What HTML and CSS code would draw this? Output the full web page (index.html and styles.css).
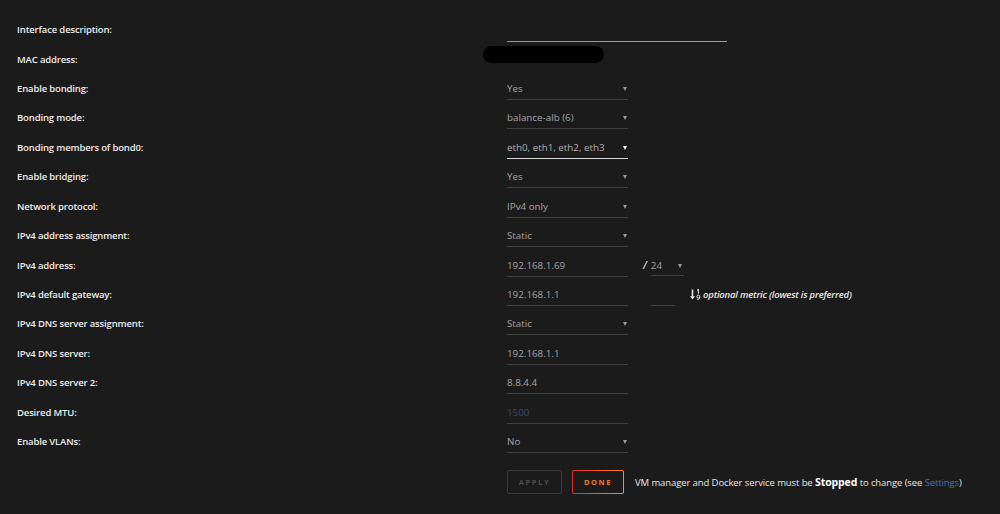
FILE: index.html
```html
<!DOCTYPE html>
<html>
<head>
<meta charset="utf-8">
<link rel="stylesheet" href="styles.css">
</head>
<body>
<div class="form">
  <div class="label">Interface description:</div>
  <div class="cell"><div class="field desc"></div></div>

  <div class="label">MAC address:</div>
  <div class="cell"><div class="redact"></div></div>

  <div class="label">Enable bonding:</div>
  <div class="cell"><div class="field select"><span>Yes</span><i class="arrow"></i></div></div>

  <div class="label">Bonding mode:</div>
  <div class="cell"><div class="field select"><span>balance-alb (6)</span><i class="arrow"></i></div></div>

  <div class="label">Bonding members of bond0:</div>
  <div class="cell"><div class="field select focus"><span>eth0, eth1, eth2, eth3</span><i class="arrow"></i></div></div>

  <div class="label">Enable bridging:</div>
  <div class="cell"><div class="field select"><span>Yes</span><i class="arrow"></i></div></div>

  <div class="label">Network protocol:</div>
  <div class="cell"><div class="field select"><span>IPv4 only</span><i class="arrow"></i></div></div>

  <div class="label">IPv4 address assignment:</div>
  <div class="cell"><div class="field select"><span>Static</span><i class="arrow"></i></div></div>

  <div class="label">IPv4 address:</div>
  <div class="cell">
    <div class="field"><span>192.168.1.69</span></div>
    <span class="slash">/</span>
    <div class="field select mask"><span>24</span><i class="arrow"></i></div>
  </div>

  <div class="label">IPv4 default gateway:</div>
  <div class="cell">
    <div class="field"><span>192.168.1.1</span></div>
    <div class="field metric"></div>
    <span class="hint">
      <svg class="sort" width="11" height="11" viewBox="0 0 11 11" aria-hidden="true">
        <path d="M2.5 0.5 V9" stroke="#e6e6e6" stroke-width="1.6" fill="none"/>
        <path d="M0 7.2 L2.5 10.5 L5 7.2 Z" fill="#e6e6e6"/>
        <path d="M7.2 1.3 L8.4 0.5 V4.8" stroke="#e6e6e6" stroke-width="1.1" fill="none"/>
        <circle cx="8.3" cy="7.6" r="1.5" stroke="#e6e6e6" stroke-width="1" fill="none"/>
        <path d="M9.8 7.6 C9.8 9.6 8.8 10.5 7.4 10.5" stroke="#e6e6e6" stroke-width="1" fill="none"/>
      </svg>
      <em>optional metric (lowest is preferred)</em>
    </span>
  </div>

  <div class="label">IPv4 DNS server assignment:</div>
  <div class="cell"><div class="field select"><span>Static</span><i class="arrow"></i></div></div>

  <div class="label">IPv4 DNS server:</div>
  <div class="cell"><div class="field"><span>192.168.1.1</span></div></div>

  <div class="label">IPv4 DNS server 2:</div>
  <div class="cell"><div class="field"><span>8.8.4.4</span></div></div>

  <div class="label">Desired MTU:</div>
  <div class="cell"><div class="field"><span class="placeholder">1500</span></div></div>

  <div class="label">Enable VLANs:</div>
  <div class="cell"><div class="field select"><span>No</span><i class="arrow"></i></div></div>

  <div class="label"></div>
  <div class="cell actions">
    <button class="btn apply" disabled>APPLY</button>
    <button class="btn done">DONE</button>
    <span class="note">VM manager and Docker service must be <b>Stopped</b> to change (see <a href="#">Settings</a>)</span>
  </div>
</div>
</body>
</html>
```

FILE: styles.css
```css
* { box-sizing: border-box; }

html, body {
  margin: 0;
  padding: 0;
  background: #1c1b1b;
  width: 1000px;
  height: 514px;
  overflow: hidden;
}

body {
  font-family: "Open Sans", "Noto Sans", sans-serif;
  font-size: 9.5px;
  color: #f2f2f2;
}

.form {
  display: grid;
  grid-template-columns: 490px 1fr;
  grid-auto-rows: 29.43px;
  padding: 15px 0 0 17px;
  align-items: center;
}

.label {
  font-weight: 600;
  color: #ececec;
  white-space: nowrap;
  letter-spacing: -0.15px;
}

.cell {
  display: flex;
  align-items: center;
  height: 100%;
}

.field {
  width: 121px;
  height: 23px;
  padding-top: 2px;
  border-bottom: 1px solid #404040;
  display: flex;
  align-items: center;
  justify-content: space-between;
  color: #a3a3a3;
  font-size: 9.8px;
  line-height: 20px;
  flex: none;
}

.field.desc {
  width: 220px;
  height: 25px;
  border-bottom-color: #9a9a9a;
}

.field.focus {
  border-bottom-color: #d8d8d8;
  color: #b0b0b0;
}

.arrow {
  width: 0;
  height: 0;
  border-left: 2.5px solid transparent;
  border-right: 2.5px solid transparent;
  border-top: 4px solid #9a9a9a;
  margin-right: 1px;
}

.focus .arrow { border-top-color: #ffffff; }

.redact {
  width: 121px;
  height: 17px;
  border-radius: 9px;
  background: #000;
  margin-left: -24px;
  margin-top: -9px;
}

.slash {
  margin-left: 15px;
  margin-right: 4px;
  font-style: italic;
  font-weight: 600;
  color: #dcdcdc;
  font-size: 10px;
}

.field.mask {
  width: 33px;
  height: 21px;
}

.mask .arrow { margin-right: 2px; }

.field.metric {
  width: 24px;
  margin-left: 23px;
}

.hint {
  display: flex;
  align-items: center;
  margin-left: 15px;
  color: #e6e6e6;
}

.hint em {
  font-style: italic;
  font-weight: 600;
  margin-left: 2px;
  letter-spacing: -0.2px;
}

.sort { display: block; }

.placeholder { color: #3c4a6e; }

.actions {
  align-self: start;
  height: 24px;
  margin-top: 13.5px;
}

.btn {
  height: 24px;
  background: transparent;
  font-family: "Open Sans", "Noto Sans", sans-serif;
  font-weight: 700;
  font-size: 7.5px;
  letter-spacing: 1.6px;
  padding: 0;
  border-radius: 2px;
  display: flex;
  align-items: center;
  justify-content: center;
}

.apply {
  width: 55px;
  border: 1px solid #3a3a3a;
  color: #4d4d4d;
}

.done {
  width: 52px;
  margin-left: 10px;
  border: 1px solid transparent;
  background: linear-gradient(#1c1b1b, #1c1b1b) padding-box, linear-gradient(90deg, #e22828, #ff8c2f) border-box;
  color: #f07c26;
}

.note {
  margin-left: 11px;
  color: #e6e6e6;
  white-space: nowrap;
  letter-spacing: -0.1px;
}

.note b {
  font-weight: 700;
  font-size: 10.5px;
  color: #ffffff;
}

.note a {
  color: #486dba;
  text-decoration: none;
}
```
